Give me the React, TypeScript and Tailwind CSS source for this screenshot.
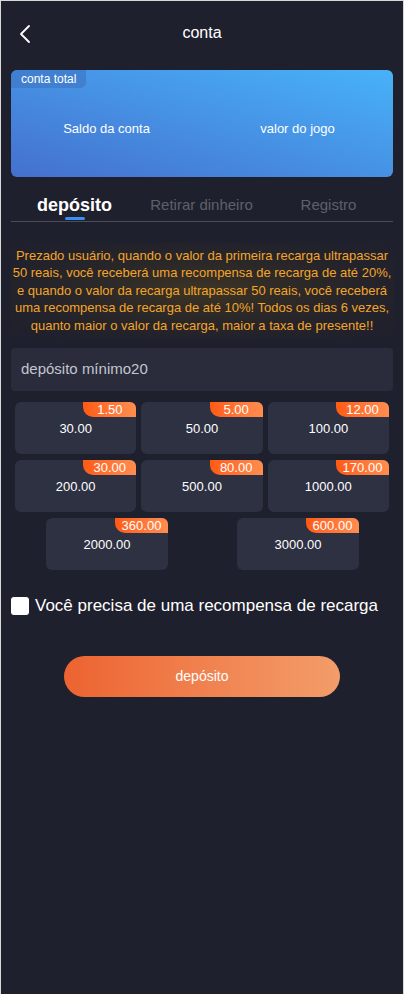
import React from "react";

const rows = [
  [
    { value: "30.00", bonus: "1.50" },
    { value: "50.00", bonus: "5.00" },
    { value: "100.00", bonus: "12.00" },
  ],
  [
    { value: "200.00", bonus: "30.00" },
    { value: "500.00", bonus: "80.00" },
    { value: "1000.00", bonus: "170.00" },
  ],
];

const lastRow = [
  { value: "2000.00", bonus: "360.00" },
  { value: "3000.00", bonus: "600.00" },
];

const notice = [
  "Prezado usuário, quando o valor da primeira recarga ultrapassar",
  "50 reais, você receberá uma recompensa de recarga de até 20%,",
  "e quando o valor da recarga ultrapassar 50 reais, você receberá",
  "uma recompensa de recarga de até 10%! Todos os dias 6 vezes,",
  "quanto maior o valor da recarga, maior a taxa de presente!!",
];

const AmountCard = ({ value, bonus }: { value: string; bonus: string }) => (
  <div className="relative w-[122px] h-[52px] rounded-md bg-[#2e3142] flex items-center justify-center">
    <span className="absolute top-0 right-0 w-[53px] h-[15px] rounded-tr-md rounded-bl-[10px] bg-gradient-to-r from-[#ff5a10] to-[#ff8d4e] text-white text-[13px] leading-[15px] text-center">
      {bonus}
    </span>
    <span className="text-white text-[13px] mt-[2px]">{value}</span>
  </div>
);

const App = () => {
  return (
    <div
      className="w-[404px] h-[994px] bg-[#1f202d] border-x border-t border-[#d9d9d9] overflow-hidden"
      style={{ fontFamily: '"Liberation Sans", Arial, sans-serif' }}
    >
      <div className="relative h-[64px] flex items-center justify-center">
        <svg
          className="absolute left-[17px] top-[23px]"
          width="14"
          height="20"
          viewBox="0 0 14 20"
          fill="none"
        >
          <path d="M11 2L3 10l8 8" stroke="#fff" strokeWidth="1.8" strokeLinecap="round" strokeLinejoin="round" />
        </svg>
        <span className="text-white text-[16px]">conta</span>
      </div>

      <div className="mx-[10px] mt-[5px] h-[107px] rounded-md bg-gradient-to-tr from-[#4470ce] to-[#47b2f9] relative">
        <span className="absolute left-0 top-0 h-[18px] px-[10px] rounded-tl-md rounded-br-md bg-[#3f78c8]/70 text-white text-[12px] leading-[18px]">
          conta total
        </span>
        <div className="flex h-full items-center pt-[10px]">
          <div className="flex-1 text-center text-white text-[13px]">Saldo da conta</div>
          <div className="flex-1 text-center text-white text-[13px]">valor do jogo</div>
        </div>
      </div>

      <div className="mx-[10px] mt-[12px] border-b border-[#4b4d57]">
        <div className="flex h-[32px] items-center">
          <div className="relative w-[127px] h-full flex items-center justify-center">
            <span className="text-white font-bold text-[18px]">depósito</span>
            <span className="absolute bottom-[1px] left-[54px] w-[20px] h-[3px] rounded-full bg-[#3a8ef6]" />
          </div>
          <div className="w-[127px] text-center text-[#5d606c] text-[15px]">Retirar dinheiro</div>
          <div className="w-[127px] text-center text-[#5d606c] text-[15px]">Registro</div>
        </div>
      </div>

      <div className="mx-[9px] mt-[21px] h-[95px] flex flex-col items-center justify-center bg-[radial-gradient(ellipse_at_center,#40362333_0%,#1f202d_100%),radial-gradient(ellipse_at_center,#3e3524_0%,#2c2826_55%,#1f202d_100%)]">
        {notice.map((line) => (
          <p key={line} className="text-[#f3a52a] text-[13px] leading-[17.5px] text-center whitespace-nowrap">
            {line}
          </p>
        ))}
      </div>

      <div className="mx-[10px] mt-[10px] h-[43px] rounded bg-[#2a2c3b] flex items-center px-[10px]">
        <span className="text-[#c2c6d0] text-[15px]">depósito mínimo20</span>
      </div>

      <div className="mx-[14px] mt-[11px] flex flex-col gap-[6px]">
        {rows.map((row, i) => (
          <div key={i} className="flex gap-[5px]">
            {row.map((a) => (
              <AmountCard key={a.value} value={a.value} bonus={a.bonus} />
            ))}
          </div>
        ))}
        <div className="flex gap-[69px] pl-[31px]">
          {lastRow.map((a) => (
            <AmountCard key={a.value} value={a.value} bonus={a.bonus} />
          ))}
        </div>
      </div>

      <label className="mx-[10px] mt-[23px] flex items-center gap-[6px]">
        <span className="w-[18px] h-[18px] rounded-[3px] bg-white" />
        <span className="text-white text-[17px]">Você precisa de uma recompensa de recarga</span>
      </label>

      <div className="mt-[37px] flex justify-center">
        <button className="w-[276px] h-[41px] rounded-full bg-gradient-to-r from-[#ec6330] to-[#f29d6a] text-white text-[14px]">
          depósito
        </button>
      </div>
    </div>
  );
};

export default App;
